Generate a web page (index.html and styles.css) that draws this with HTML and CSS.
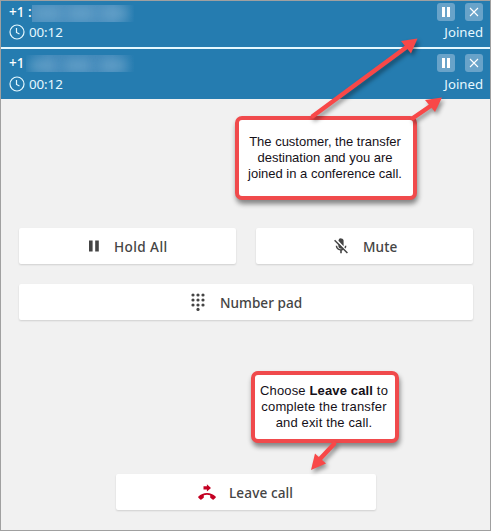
FILE: index.html
```html
<!DOCTYPE html>
<html lang="en">
<head>
<meta charset="utf-8">
<title>Conference call</title>
<link rel="stylesheet" href="styles.css">
</head>
<body>
<main class="panel">
  <section class="call first">
    <div class="row top">
      <span class="phone">+1 :</span>
      <span class="redacted"><i></i><i></i><i></i></span>
      <span class="actions">
        <span class="chip"><svg width="18" height="18"><path d="M5 4h3v10H5zM10 4h3v10h-3z" fill="#fff"/></svg></span>
        <span class="chip"><svg width="18" height="18"><path d="M5 5l8 8M13 5l-8 8" stroke="#fff" stroke-width="1.1"/></svg></span>
      </span>
    </div>
    <div class="row bottom">
      <svg class="clock" width="16" height="16" fill="none" stroke="#e5f8ff" stroke-width="1.2"><circle cx="8" cy="8" r="7"/><path d="M7.5 4v4.5l3 1.5"/></svg>
      <span class="time">00:12</span><span class="state">Joined</span>
    </div>
  </section>
  <section class="call second">
    <div class="row top">
      <span class="phone">+1</span>
      <span class="redacted"><i></i><i></i><i></i></span>
      <span class="actions">
        <span class="chip"><svg width="18" height="18"><path d="M5 4h3v10H5zM10 4h3v10h-3z" fill="#fff"/></svg></span>
        <span class="chip"><svg width="18" height="18"><path d="M5 5l8 8M13 5l-8 8" stroke="#fff" stroke-width="1.1"/></svg></span>
      </span>
    </div>
    <div class="row bottom">
      <svg class="clock" width="16" height="16" fill="none" stroke="#e5f8ff" stroke-width="1.2"><circle cx="8" cy="8" r="7"/><path d="M7.5 4v4.5l3 1.5"/></svg>
      <span class="time">00:12</span><span class="state">Joined</span>
    </div>
  </section>
  <section class="controls">
    <button class="button hold"><svg width="10" height="12"><path d="M0 .5h3.6v11H0zM6.2.5h3.6v11H6.2z" fill="#444"/></svg><span>Hold All</span></button>
    <button class="button mute"><svg width="14" height="16" viewBox="0 0 14 16"><path d="M4.4 2.700a2.600 2.600 0 0 1 5.200.6v4.900zM4.400 5.500l4.600 4.700c-2 1.300-4.600 0-4.600-2zM10.900 7.700h1.500c0 1.100-.3 2-.9 2.800l-1.100-1c.3-.5.500-1.100.5-1.800zM1.700 7.700h1.500c0 2.600 3 4.300 5.600 3l.9 1c-.6.4-1.200.6-1.900.7v2.800H6.200v-2.800C3.800 12.100 1.700 10.100 1.700 7.700z" fill="#444"/><path d="M.6 2.200l12.800 12.800" stroke="#444" stroke-width="1.500"/></svg><span>Mute</span></button>
    <button class="button pad"><svg width="14" height="18" fill="#444"><circle cx="2" cy="2" r="1.600"/><circle cx="7" cy="2" r="1.600"/><circle cx="12" cy="2" r="1.600"/><circle cx="2" cy="7" r="1.600"/><circle cx="7" cy="7" r="1.600"/><circle cx="12" cy="7" r="1.600"/><circle cx="2" cy="12" r="1.600"/><circle cx="7" cy="12" r="1.600"/><circle cx="12" cy="12" r="1.600"/><circle cx="7" cy="16.400" r="1.600"/></svg><span>Number pad</span></button>
  </section>
  <button class="button leave"><svg width="18" height="17" viewBox="0 0 18 17" fill="#c40022"><path d="M5.500 2.300h3.400V.2L13 4 8.900 7.500V5.500H5.500zM9 8.900c3.400 0 6.200 1.300 8.600 3.600.4.400.4.800 0 1.200l-1.900 1.900c-.4.300-.8.300-1.100 0l-2-1.500c-.3-.2-.4-.5-.4-.8v-2.100c-2-.7-4.400-.7-6.400 0v2.100c0 .3-.1.600-.4.800l-2 1.500c-.3.300-.7.300-1.100 0L.4 13.700c-.4-.4-.4-.8 0-1.200C2.800 10.200 5.600 8.900 9 8.900z"/></svg><span>Leave call</span></button>
  <aside class="callout joined">The customer, the transfer<br>destination and you are<br>joined in a conference call.</aside>
  <aside class="callout exit">Choose <b>Leave call</b> to<br>complete the transfer<br>and exit the call.</aside>
  <svg class="arrows" width="491" height="531" fill="#f84848" stroke="#f84848" stroke-linecap="round">
    <g class="arrow"><path d="M313 116L408 46" stroke-width="4.500"/><path d="M417.500 38.500L411 53.500 401 41z" stroke="none"/></g>
    <g class="arrow"><path d="M413 118L432 105" stroke-width="4.500"/><path d="M442 97.500L435 112 425 100z" stroke="none"/></g>
    <g class="arrow"><path d="M334 444L319 460" stroke-width="4.500"/><path d="M311 470L315 453.500 326 463.500z" stroke="none"/></g>
  </svg>
</main>
</body>
</html>
```
FILE: styles.css
```css
* { box-sizing: border-box; }
body { margin: 0; }
.panel {
  position: relative;
  width: 491px;
  height: 531px;
  overflow: hidden;
  border: 1px solid #a0a0a0;
  background: #f1f1f1;
  font-family: "Noto Sans", sans-serif;
}
.call { background: #257cb0; color: #e5f8ff; padding: 0 7px 0 8px; }
.first { height: 48px; border-bottom: 2px solid #e5f8ff; padding-top: 1px; }
.second { height: 50px; padding-top: 4px; }
.row { display: flex; align-items: center; }
.top { height: 20px; }
.bottom { height: 20px; font-size: 13.4px; }
.second .bottom { height: 22px; }
.phone { width: 23px; white-space: nowrap; font-size: 13.5px; line-height: 18px; font-weight: 500; color: #fff; }
.second .phone { width: 17px; }
.redacted {
  display: flex;
  justify-content: space-around;
  align-items: center;
  width: 102px;
  height: 17px;
  margin-top: 2px;
  padding-right: 4px;
  overflow: hidden;
  background: linear-gradient(90deg, #4a8fbe 0 80%, transparent);
}
.redacted i { width: 26px; height: 9px; background: #6ca5cb; filter: blur(6px); }
.second .redacted {
  width: 108px;
  margin-top: 0;
  background: linear-gradient(90deg, transparent, #4189ba 20% 80%, transparent);
}
.second .redacted i { margin-top: 4px; }
.actions { display: flex; gap: 10px; margin-left: auto; }
.chip { width: 18px; height: 18px; border-radius: 3px; background: #69a3c9; }
.chip svg { display: block; }
.time { margin-left: 4px; letter-spacing: -.1px; }
.state { margin-left: auto; font-size: 13.2px; letter-spacing: 0; }
.controls {
  display: grid;
  grid-template-columns: 217px 217px;
  gap: 20px;
  padding: 129px 18px 0;
}
.button {
  display: flex;
  align-items: center;
  height: 36px;
  border: 0;
  border-radius: 2px;
  background: #fff;
  box-shadow: 0 1px 2px rgba(0, 0, 0, .14);
  color: #444;
  font: 500 13.6px "Noto Sans", sans-serif;
  letter-spacing: .1px;
  white-space: nowrap;
}
.button svg { flex: none; }
.hold { padding: 0 0 0 70px; gap: 15px; letter-spacing: .4px; }
.mute { padding: 0 0 0 78px; gap: 15px; }
.pad { grid-column: span 2; padding: 0 0 0 172px; gap: 15px; width: 454px; letter-spacing: 0; }
.leave { width: 260px; margin: 154px 0 0 115px; padding: 0 0 0 82px; gap: 13px; }
.callout {
  position: absolute;
  display: flow-root;
  border: 4px solid #f04a4c;
  border-radius: 7px;
  background: #fff;
  box-shadow: 1px 4px 5px rgba(0, 0, 0, .45);
  color: #151018;
  font: 13px/16px "Liberation Sans", Arial, sans-serif;
  text-align: center;
  white-space: nowrap;
}
.joined { left: 234px; top: 115px; width: 182px; height: 84px; padding: 14px 2px 0 0; }
.exit { left: 250px; top: 370px; width: 148px; height: 72px; padding: 8px 2px 0 0; letter-spacing: .15px; }
.arrows { position: absolute; left: -1px; top: -1px; }
.arrow { filter: drop-shadow(2px 3px 2px rgba(0, 0, 0, .4)); }
```
